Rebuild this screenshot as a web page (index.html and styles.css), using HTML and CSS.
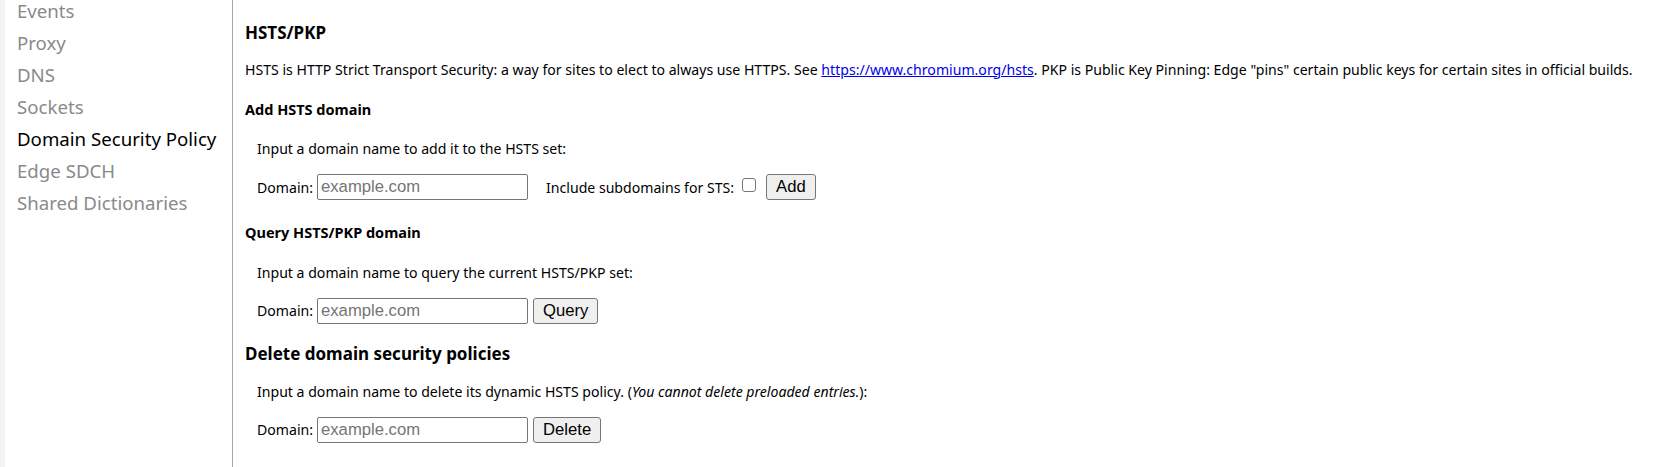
FILE: index.html
```html
<!DOCTYPE html>
<html lang="en">
<head>
<meta charset="utf-8">
<title>Domain Security Policy</title>
<link rel="stylesheet" href="styles.css">
</head>
<body>
<div class="layout">
  <nav class="sidebar">
    <ul class="nav-list">
      <li class="nav-item">Events</li>
      <li class="nav-item">Proxy</li>
      <li class="nav-item">DNS</li>
      <li class="nav-item">Sockets</li>
      <li class="nav-item nav-item-active">Domain Security Policy</li>
      <li class="nav-item">Edge SDCH</li>
      <li class="nav-item">Shared Dictionaries</li>
    </ul>
  </nav>
  <main class="content">
    <h3 class="title title-first">HSTS/PKP</h3>
    <p class="intro">HSTS is HTTP Strict Transport Security: a way for sites to elect to always use HTTPS. See <a class="link" href="#">https://www.chromium.org/hsts</a>. PKP is Public Key Pinning: Edge "pins" certain public keys for certain sites in official builds.</p>

    <h4 class="subtitle">Add HSTS domain</h4>
    <p class="hint">Input a domain name to add it to the HSTS set:</p>
    <div class="form-row">
      <label class="field-label">Domain:</label>
      <input class="text-input" type="text" placeholder="example.com">
      <label class="field-label check-label">Include subdomains for STS:</label>
      <input class="checkbox" type="checkbox">
      <button class="btn">Add</button>
    </div>

    <h4 class="subtitle">Query HSTS/PKP domain</h4>
    <p class="hint">Input a domain name to query the current HSTS/PKP set:</p>
    <div class="form-row">
      <label class="field-label">Domain:</label>
      <input class="text-input" type="text" placeholder="example.com">
      <button class="btn btn-gap">Query</button>
    </div>

    <h3 class="title">Delete domain security policies</h3>
    <p class="hint">Input a domain name to delete its dynamic HSTS policy. (<i>You cannot delete preloaded entries.</i>):</p>
    <div class="form-row">
      <label class="field-label">Domain:</label>
      <input class="text-input" type="text" placeholder="example.com">
      <button class="btn btn-gap">Delete</button>
    </div>
  </main>
</div>
</body>
</html>
```
FILE: styles.css
```css
html, body {
  margin: 0;
  padding: 0;
  background: #ffffff;
  height: 100%;
  overflow: hidden;
}

body {
  font-family: "Noto Sans", "Open Sans", sans-serif;
  color: #000000;
}

.layout {
  display: flex;
  height: 467px;
}

.sidebar {
  box-sizing: border-box;
  width: 233px;
  flex: none;
  border-left: 5px solid #f3f3f3;
  border-right: 1px solid #a6a6a6;
  background: #ffffff;
}

.nav-list {
  list-style: none;
  margin: -5px 0 0 0;
  padding: 0 0 0 12px;
}

.nav-item {
  height: 32px;
  line-height: 32px;
  font-size: 18.65px;
  color: #8a8a8a;
  white-space: nowrap;
}

.nav-item-active {
  color: #000000;
}

.content {
  flex: 1;
  padding-left: 12px;
}

.title {
  margin: 19px 0 0 0;
  font-size: 17px;
  line-height: 24px;
  font-weight: 700;
}

.title-first {
  margin-top: 21px;
}

.form-row + .title {
  margin-top: 18px;
}

.intro {
  margin: 14.5px 0 0 0;
  font-size: 14.1px;
  line-height: 20px;
  white-space: nowrap;
}

.link {
  color: #0000ee;
  text-decoration: underline;
}

.subtitle {
  margin: 19px 0 0 0;
  font-size: 14.5px;
  line-height: 20px;
  font-weight: 700;
}

.form-row + .subtitle {
  margin-top: 22.2px;
}

.hint {
  margin: 20.5px 0 0 12px;
  font-size: 14.1px;
  line-height: 20px;
  white-space: nowrap;
}

.title + .hint {
  margin-top: 16px;
}

.form-row {
  display: flex;
  align-items: center;
  height: 26px;
  margin: 15px 0 0 12px;
  font-size: 14.1px;
}

.field-label {
  white-space: nowrap;
}

.check-label {
  margin-left: 18px;
}

.text-input {
  box-sizing: border-box;
  width: 211px;
  height: 26px;
  margin: 0 0 0 4px;
  padding: 0 3px;
  border: 1px solid #767676;
  border-radius: 2px;
  font-family: "Liberation Sans", Arial, sans-serif;
  font-size: 16.67px;
  color: #000000;
  background: #ffffff;
}

.text-input::placeholder {
  color: #757575;
}

.checkbox {
  appearance: none;
  -webkit-appearance: none;
  box-sizing: border-box;
  width: 14px;
  height: 14px;
  margin: 0 0 5px 8px;
  border: 1px solid #767676;
  border-radius: 3px;
  background: #ffffff;
}

.btn {
  box-sizing: border-box;
  height: 26px;
  margin-left: 10px;
  padding: 0 9px;
  border: 1px solid #767676;
  border-radius: 3px;
  background: #efefef;
  font-family: "Liberation Sans", Arial, sans-serif;
  font-size: 16.67px;
  color: #000000;
}

.btn-gap {
  margin-left: 5px;
}
```
